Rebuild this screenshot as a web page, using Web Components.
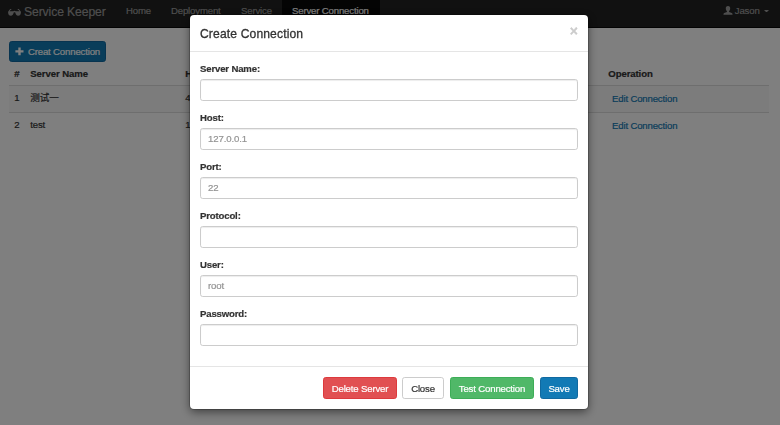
<!DOCTYPE html>
<html lang="en">
<head>
<meta charset="utf-8">
<title>Service Keeper</title>
<style>
html,body{margin:0;height:100%;overflow:hidden}
body{background:#fff;color:#333;font:9.6px/13.27px "Liberation Sans","Noto Sans CJK SC",sans-serif;letter-spacing:-.16px;-webkit-text-stroke:.2px currentColor}
</style>
</head>
<body>
<sk-app></sk-app>
<script>
const define = (name, html, setup) => customElements.define(name, class extends HTMLElement {
  connectedCallback() {
    if (this.shadowRoot) return;
    const root = this.attachShadow({mode: 'open'});
    const t = document.createElement('template');
    t.innerHTML = '<style>*{box-sizing:border-box}</style>' + html;
    root.append(t.content.cloneNode(true));
    if (setup) setup(this, root);
  }
});

const icons = {
  glasses: '<svg width="13" height="7" viewBox="0 0 13 7"><path fill="currentColor" d="M2.2 0 L3.3 0 L3.3 .7 L2.5 .9 L1.6 2.2 H5.2 Q6.5 1.5 7.8 2.2 H11.4 L10.5 .9 L9.7 .7 V0 H10.8 L12.9 2.7 V3.5 C12.7 5.7 11.8 6.7 10.2 6.7 C8.5 6.7 7.6 5.5 7.3 3.5 Q6.5 2.8 5.7 3.5 C5.4 5.5 4.5 6.7 2.8 6.7 C1.2 6.7 .3 5.7 .1 3.5 V2.7 Z"/></svg>',
  plus: '<svg width="9" height="9" viewBox="0 0 9 9"><path fill="currentColor" d="M3.3 .4H5.7V3.2H8.5V5.5H5.7V8.3H3.3V5.5H.4V3.2H3.3Z"/></svg>',
  user: '<svg width="10" height="9" viewBox="0 0 10 9"><path fill="currentColor" d="M5 0C6.6 0 7.3 1 7.2 2.5C7.1 3.9 6.6 4.6 6.1 5.1V6L8.8 7.1Q9.5 7.4 9.5 8V8.8H.5V8Q.5 7.4 1.2 7.1L3.9 6V5.1C3.4 4.6 2.9 3.9 2.8 2.5C2.7 1 3.4 0 5 0Z"/></svg>'
};

define('sk-icon', '<style>:host{display:block;line-height:0}svg{display:block}</style><span></span>',
  (el, root) => { root.querySelector('span').innerHTML = icons[el.getAttribute('name')]; });

define('sk-nav-item', `<style>
:host{display:block;width:var(--w);height:27px;padding:4px 0 0 10px;color:#9d9d9d;line-height:14px;white-space:nowrap}
:host([active]){background:#080808;color:#fff}
</style><slot></slot>`);

define('sk-navbar', `<style>
:host{display:flex;height:28px;background:#222;border-bottom:1px solid #080808;padding:0 11px 0 8px}
.brand{display:flex;align-items:flex-start;gap:3px;width:108px;color:#9d9d9d;font-size:12.2px;line-height:14px;padding-top:5px;white-space:nowrap;letter-spacing:-.12px}
.brand sk-icon{margin-top:4px}
.user{display:flex;margin-left:auto;color:#9d9d9d;line-height:14px;padding-top:4px}
.user sk-icon{margin:2px 2px 0 0}
.caret{width:5.4px;border:2.7px solid transparent;border-top-color:currentColor;border-bottom:0;height:0;margin:6px 0 0 4px}
</style>
<div class="brand"><sk-icon name="glasses"></sk-icon><span>Service Keeper</span></div>
<sk-nav-item style="--w:45px">Home</sk-nav-item><sk-nav-item style="--w:70px">Deployment</sk-nav-item><sk-nav-item style="--w:51px">Service</sk-nav-item><sk-nav-item style="--w:98px" active>Server Connection</sk-nav-item>
<div class="user"><sk-icon name="user"></sk-icon><span>Jason</span><i class="caret"></i></div>`);

define('sk-button', `<style>
:host{display:flex;align-items:center;justify-content:center;gap:4px;width:var(--w);height:22px;border:1px solid #ccc;border-radius:2.7px;background:#fff;color:#333;white-space:nowrap;flex:none;padding-top:2px}
:host([kind=primary]){background:#127ab5;border-color:#1069a0;color:#fff}
:host([kind=danger]){background:#e15052;border-color:#dd3a3d;color:#fff}
:host([kind=success]){background:#50b868;border-color:#3dad57;color:#fff}
</style><slot></slot>`);

define('sk-table', `<style>
:host{display:block}
.row{display:grid;grid-template-columns:16px 155px 423px 166px;height:27px;border-top:1px solid #ddd;line-height:13px}
.row>*{padding:5px 5.3px 0}
.head{height:23px;border:0;font-weight:bold;letter-spacing:-.1px}
.first{background:#f9f9f9}
.row a{color:#127ab5;padding:6px 9px 0}
</style>
<div class="row head"><span>#</span><span>Server Name</span><span>H</span><span>Operation</span></div>
<div class="row first"><span>1</span><span>测试一</span><span>4</span><a>Edit Connection</a></div>
<div class="row"><span>2</span><span>test</span><span>1</span><a>Edit Connection</a></div>`);

define('sk-field', `<style>
:host{display:block;height:49px}
label{display:block;font-weight:bold;height:17px;line-height:13px}
input{display:block;width:100%;height:22px;border:1px solid #ccc;border-radius:2.7px;padding:0 7px 2px;font:inherit;letter-spacing:-.1px;-webkit-text-stroke:inherit;color:#555;background:#fff;box-shadow:inset 0 1px 1px rgba(0,0,0,.075);outline:0}
input::placeholder{color:#939393;opacity:1}
</style><label></label><input>`, (el, root) => {
  root.querySelector('label').textContent = el.getAttribute('label');
  root.querySelector('input').placeholder = el.getAttribute('hint') || '';
});

define('sk-modal', `<style>
:host{position:fixed;inset:0;background:rgba(0,0,0,.5);display:flex;justify-content:center;align-items:flex-start;padding:15px 2px 0 0}
section{width:398px;height:394px;background:#fff;border-radius:4px;box-shadow:0 0 0 1px rgba(0,0,0,.2),0 3px 10px rgba(0,0,0,.5);display:flex;flex-direction:column}
header{display:flex;justify-content:space-between;height:37px;padding:10px 10px 0;border-bottom:1px solid #e5e5e5;font-size:12.1px;line-height:18px;letter-spacing:.14px;-webkit-text-stroke:.3px currentColor}
header b{font-size:13.93px;line-height:13px;color:#ccc;letter-spacing:0}
main{flex:1;padding:10px 10px 0}
footer{display:flex;justify-content:flex-end;height:43px;border-top:1px solid #e5e5e5;padding:10px 10px 0}
</style>
<section><header><span><slot name="title"></slot></span><b>×</b></header><main><slot></slot></main><footer><slot name="actions"></slot></footer></section>`);

define('sk-app', `<style>
:host{display:block}
.page{padding:13px 11px 0 9px}
.page>sk-button{height:21px;padding-top:0}
.actions{display:flex}
</style>
<sk-navbar></sk-navbar>
<div class="page">
<sk-button kind="primary" style="--w:97px"><sk-icon name="plus"></sk-icon><span>Creat Connection</span></sk-button>
<sk-table></sk-table>
</div>
<sk-modal><span slot="title">Create Connection</span>
<sk-field label="Server Name:"></sk-field>
<sk-field label="Host:" hint="127.0.0.1"></sk-field>
<sk-field label="Port:" hint="22"></sk-field>
<sk-field label="Protocol:"></sk-field>
<sk-field label="User:" hint="root"></sk-field>
<sk-field label="Password:"></sk-field>
<div class="actions" slot="actions">
<sk-button kind="danger" style="--w:74px;margin-right:5px">Delete Server</sk-button>
<sk-button style="--w:42px;margin-right:6px">Close</sk-button>
<sk-button kind="success" style="--w:84px;margin-right:6px">Test Connection</sk-button>
<sk-button kind="primary" style="--w:38px">Save</sk-button>
</div>
</sk-modal>`);
</script>
</body>
</html>
